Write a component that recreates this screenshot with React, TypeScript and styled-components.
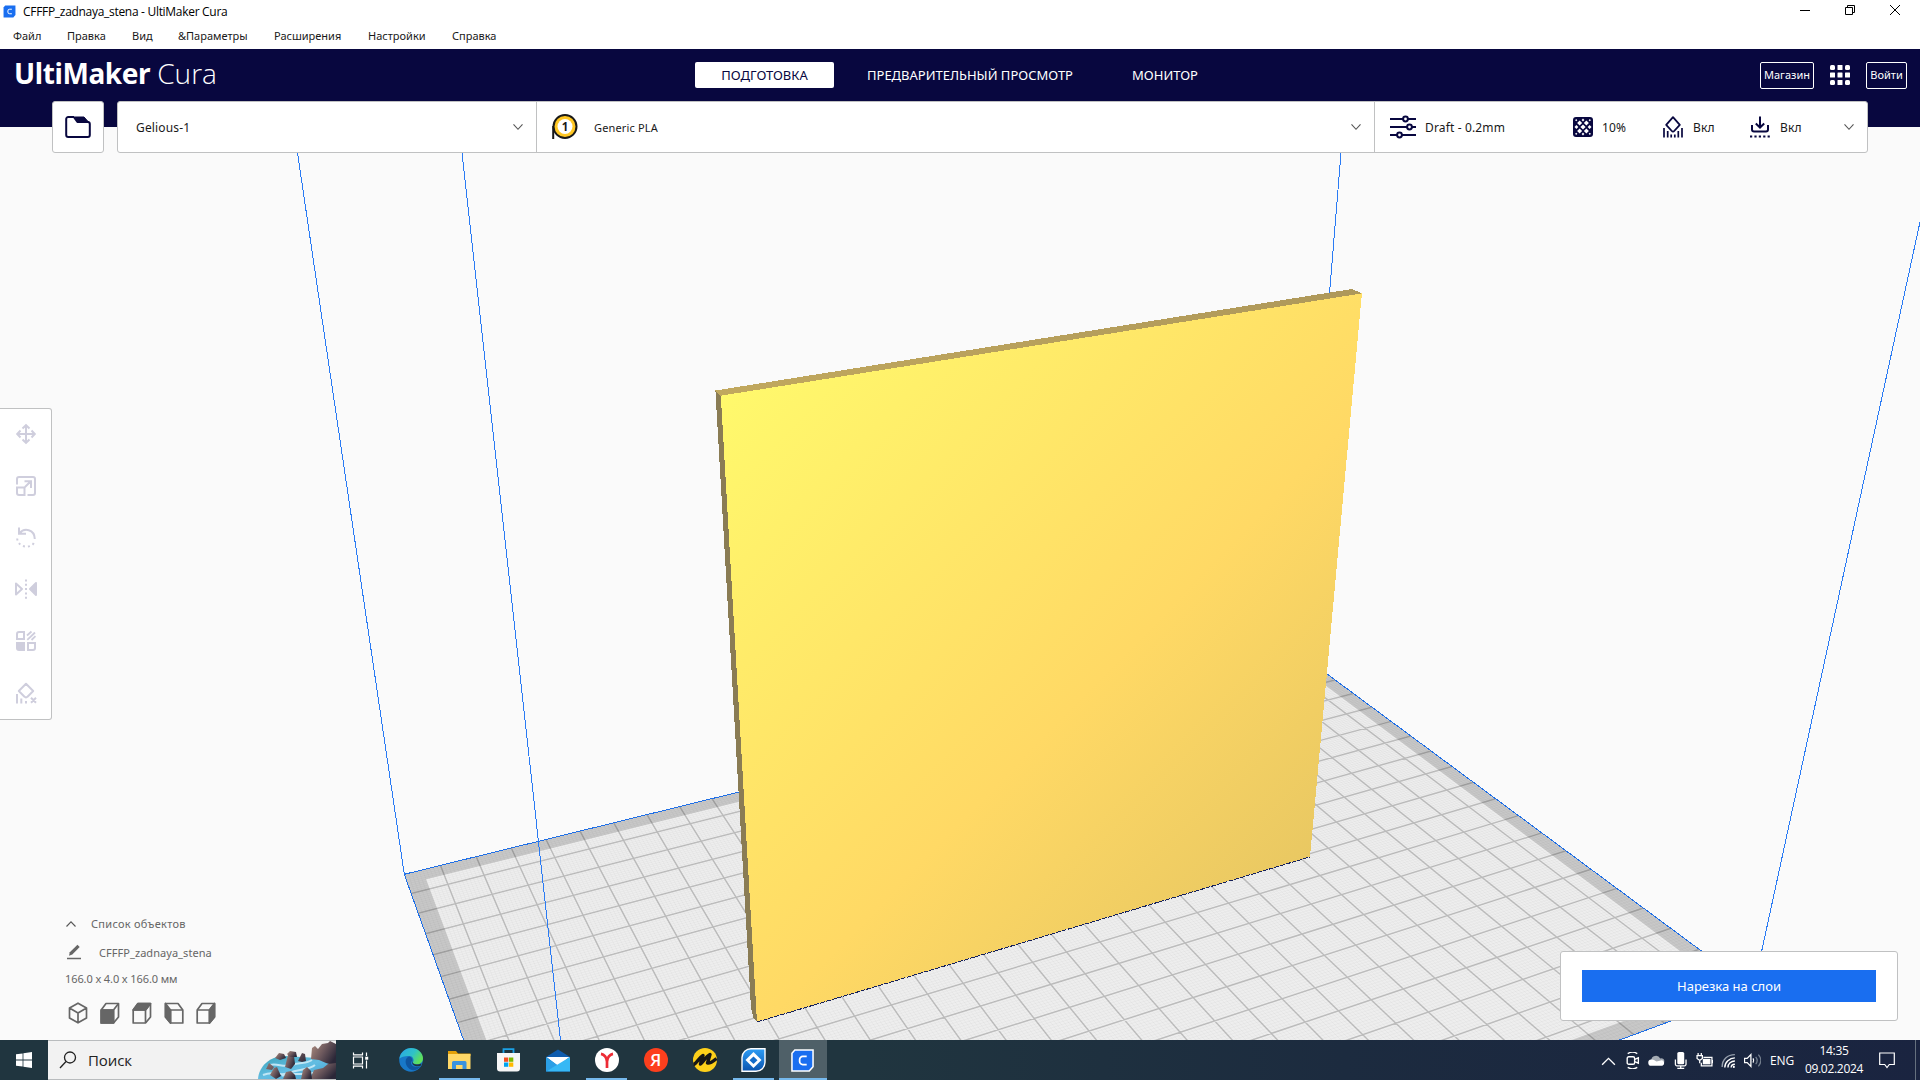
import React from "react";
import styled, { createGlobalStyle } from "styled-components";

const NAVY = "#08073f";
const BLUE = "#196ef0";
const LINE = "#c0c1c2";

const GlobalStyle = createGlobalStyle`
  * { box-sizing: border-box; }
  body { margin: 0; overflow: hidden; background: #fafafa; }
  svg { display: block; flex: none; }
`;

const Desktop = styled.div`
  width: 1920px;
  height: 1080px;
  display: flex;
  flex-direction: column;
  font-family: "Noto Sans", "Open Sans", sans-serif;
  font-size: 12px;
  color: #191919;
  white-space: nowrap;
`;

/* ---------- window chrome ---------- */

const TitleBar = styled.div`
  height: 24px;
  background: #fff;
  display: flex;
  align-items: center;
  justify-content: space-between;
  padding: 0 19px 4px 3px;
  color: #000;
`;

const TitleText = styled.div`
  display: flex;
  align-items: center;
  gap: 7px;
  padding-top: 2px;
  font-family: "Open Sans", sans-serif;
  font-size: 12px;
  letter-spacing: -0.3px;
`;

const WindowButtons = styled.div`
  display: flex;
  gap: 33px;
`;

const MenuBar = styled.div`
  height: 25px;
  background: #fff;
  display: flex;
  align-items: center;
  gap: 26px;
  padding: 0 0 3px 13px;
  font-size: 11px;
`;

const MenuItem = styled.span<{ $w: number }>`
  width: ${(p) => p.$w}px;
`;

/* ---------- workspace ---------- */

const Workspace = styled.div`
  position: relative;
  height: 991px;
  display: flex;
  flex-direction: column;
`;

const Scene = styled.svg`
  position: absolute;
  inset: 0;
`;

const Header = styled.header`
  position: relative;
  height: 52px;
  background: ${NAVY};
  display: grid;
  grid-template-columns: 695px 1fr auto;
  align-items: center;
  padding-right: 13px;
`;

const Logo = styled.div`
  display: flex;
  align-items: baseline;
  gap: 7px;
  padding: 0 0 3px 14px;
  color: #fff;
  font-size: 28px;
  line-height: 49px;
`;

const LogoBold = styled.span`
  font-weight: 700;
  letter-spacing: -0.4px;
`;

const LogoLight = styled.span`
  font-family: "Open Sans", "Noto Sans", sans-serif;
  font-weight: 300;
`;

const Tabs = styled.nav`
  display: flex;
  gap: 7px;
`;

const Tab = styled.div<{ $active?: boolean; $w: number }>`
  width: ${(p) => p.$w}px;
  height: 26px;
  line-height: 26px;
  border-radius: 2px;
  text-align: center;
  font-size: 13px;
  background: ${(p) => (p.$active ? "#fff" : "transparent")};
  color: ${(p) => (p.$active ? NAVY : "#fff")};
`;

const HeaderActions = styled.div`
  display: flex;
  align-items: center;
  gap: 15px;
`;

const OutlineButton = styled.div<{ $w: number }>`
  width: ${(p) => p.$w}px;
  height: 27px;
  line-height: 24px;
  border: 1px solid #fff;
  border-radius: 2px;
  color: #fff;
  text-align: center;
  font-size: 11px;
`;

const Stagebar = styled.div`
  position: relative;
  height: 52px;
  display: flex;
  gap: 13px;
  padding: 0 52px;
  background: linear-gradient(${NAVY} 26px, transparent 26px);
`;

const FolderButton = styled.div`
  width: 52px;
  border: 1px solid ${LINE};
  border-radius: 3px;
  background: #fff;
  display: grid;
  place-items: center;
`;

const Selector = styled.div`
  flex: 1;
  display: flex;
  border: 1px solid ${LINE};
  border-radius: 3px;
  background: #fff;
`;

const Section = styled.div<{ $w?: number; $left: number }>`
  ${(p) => (p.$w ? `width: ${p.$w}px;` : "flex: 1;")}
  display: flex;
  align-items: center;
  padding: 0 12px 0 ${(p) => p.$left}px;
  letter-spacing: 0.15px;
  & + & { border-left: 1px solid ${LINE}; }
`;

const SectionText = styled.span<{ $size?: number; $left?: number }>`
  flex: 1;
  padding-left: ${(p) => p.$left ?? 0}px;
  font-size: ${(p) => p.$size ?? 12}px;
`;

const Setting = styled.span<{ $w: number; $gap: number }>`
  width: ${(p) => p.$w}px;
  display: flex;
  align-items: center;
  gap: ${(p) => p.$gap}px;
`;

const Spacer = styled.span`
  flex: 1;
`;

const Body = styled.div`
  position: relative;
  flex: 1;
  display: grid;
  grid-template-columns: 52px 1fr auto;
`;

const ToolPanel = styled.div`
  height: 312px;
  margin-top: 255px;
  border: 1px solid ${LINE};
  border-left: 0;
  border-radius: 0 3px 3px 0;
  background: #fff;
`;

const Tool = styled.div`
  height: 51.8px;
  padding-bottom: 2px;
  display: grid;
  place-items: center;
`;

const ObjectPanel = styled.div`
  align-self: end;
  padding: 0 0 4px 13px;
  color: #666;
  font-size: 11px;
`;

const ObjectRow = styled.div<{ $h: number; $gap?: number; $left?: number; $track?: number }>`
  height: ${(p) => p.$h}px;
  display: flex;
  align-items: center;
  gap: ${(p) => p.$gap ?? 0}px;
  padding-left: ${(p) => p.$left ?? 0}px;
  letter-spacing: ${(p) => p.$track ?? 0}px;
`;

const ActionPanel = styled.div`
  align-self: end;
  width: 338px;
  height: 70px;
  margin: 0 22px 19px 0;
  border: 1px solid ${LINE};
  border-radius: 3px;
  background: #fff;
  display: grid;
  place-items: center;
`;

const SliceButton = styled.div`
  width: 294px;
  height: 32px;
  line-height: 33px;
  background: ${BLUE};
  color: #fff;
  text-align: center;
  font-size: 13px;
`;

/* ---------- taskbar ---------- */

const Taskbar = styled.div`
  height: 40px;
  display: flex;
  background: linear-gradient(90deg, #20353f 0%, #20353f 45%, #1c2b3f 70%, #1a2440 100%);
  font-family: "Open Sans", sans-serif;
`;

const StartButton = styled.div`
  width: 48px;
  display: grid;
  place-items: center;
`;

const Search = styled.div`
  width: 288px;
  background: #f2f2f2;
  border-top: 1px solid #b9bcbe;
  border-bottom: 1px solid #b9bcbe;
  display: flex;
  align-items: center;
  padding-left: 11px;
  font-size: 15px;
  color: #222;
`;

const SearchText = styled.span`
  flex: 1;
  padding-left: 11px;
  letter-spacing: -0.1px;
`;

const TaskViewButton = styled.div`
  width: 50px;
  display: grid;
  place-items: center;
`;

const TaskButton = styled.div<{ $running?: boolean; $active?: boolean }>`
  width: ${(p) => (p.$active ? 48 : 41)}px;
  margin: 0 ${(p) => (p.$active ? 0.5 : 4)}px;
  padding-top: 2px;
  display: grid;
  place-items: center;
  background: ${(p) => (p.$active ? "#4f6068" : "transparent")};
  border-bottom: 2px solid ${(p) => (p.$running || p.$active ? "#76b9ed" : "transparent")};
`;

const Tray = styled.div`
  flex: 1;
  display: flex;
  align-items: center;
  justify-content: flex-end;
  color: #fff;
  font-size: 12px;
`;

const TrayIcon = styled.span`
  width: 24px;
  display: grid;
  place-items: center;
`;

const Lang = styled.span`
  width: 36px;
  text-align: center;
  letter-spacing: -0.2px;
`;

const Clock = styled.span`
  width: 68px;
  text-align: center;
  line-height: 18px;
  font-size: 12px;
  letter-spacing: -0.3px;
`;

const Notice = styled.span`
  width: 38px;
  display: grid;
  place-items: center;
`;

const ShowDesktop = styled.span`
  width: 5px;
  height: 40px;
  margin-left: 9px;
  border-left: 1px solid #65707e;
`;

/* ---------- build plate perspective ---------- */

const U = 30;
const V = 19.85;

const project = (u: number, v: number): [number, number] => {
  const w = 1 + 0.00737 * u - 0.0157 * v;
  return [(404.3 + 39.44 * u + 0.4 * v) / w, (874.3 - 2.523 * u + 5.13 * v) / w];
};

const seg = (u1: number, v1: number, u2: number, v2: number) => {
  const a = project(u1, v1);
  const b = project(u2, v2);
  return `M${a[0].toFixed(1)} ${a[1].toFixed(1)}L${b[0].toFixed(1)} ${b[1].toFixed(1)}`;
};

const poly = (inset: number) =>
  [
    project(inset, inset),
    project(U - inset, inset),
    project(U - inset, V - inset),
    project(inset, V - inset),
  ]
    .map((p) => p.join(","))
    .join(" ");

const range = (n: number) => Array.from({ length: n }, (_, i) => i);
const major = [
  ...range(29).map((i) => seg(i + 1, 0, i + 1, V)),
  ...range(19).map((i) => seg(0, i + 1, U, i + 1)),
].join("");
const minor = [
  ...range(299).map((i) => seg((i + 1) / 10, 0, (i + 1) / 10, V)),
  ...range(198).map((i) => seg(0, (i + 1) / 10, U, (i + 1) / 10)),
].join("");

const BuildScene = () => (
  <Scene width="1920" height="991" viewBox="0 49 1920 991">
    <defs>
      <linearGradient id="face" gradientUnits="userSpaceOnUse" x1="721" y1="395" x2="1254" y2="914">
        <stop offset="0" stopColor="#fff96c" />
        <stop offset="0.63" stopColor="#ffd965" />
        <stop offset="1" stopColor="#e9c862" />
      </linearGradient>
      <linearGradient id="topface" x1="0" x2="1" y1="0" y2="0">
        <stop offset="0" stopColor="#c1a85e" />
        <stop offset="1" stopColor="#ae985a" />
      </linearGradient>
    </defs>
    <rect y="49" width="1920" height="991" fill="#fafafa" />
    <polygon points={poly(0)} fill="#c8c8c8" />
    <polygon points={poly(0.5)} fill="#eeeeee" />
    <path d={minor} stroke="#000" strokeOpacity="0.035" strokeWidth="0.8" fill="none" />
    <path d={major} stroke="#000" strokeOpacity="0.19" strokeWidth="1.5" fill="none" />
    <g stroke="#2a7bf4" strokeWidth="1" fill="none" shapeRendering="crispEdges">
      <polygon points={poly(0)} stroke="#1f6fe6" />
      <path d="M297.5 153L404.3 874.3" />
      <path d="M462 153L560.5 1040" />
      <path d="M1341 153L1300 654" />
      <path d="M1920 222L1753 991" />
    </g>
    <g shapeRendering="crispEdges">
      <polygon points="715.4,390.3 721.5,395.7 757.5,1022 753.5,1018 751,1008" fill="#8a7c54" />
      <polygon points="715.4,390.5 1352,289 1362,293.5 721,396" fill="url(#topface)" />
      <polygon points="720.8,395.7 1361.9,293.4 1310,856.7 757,1022" fill="url(#face)" />
      <path d="M757 1022L1310 856.9" stroke="#15205a" strokeWidth="1" strokeDasharray="5 1" />
    </g>
  </Scene>
);

/* ---------- icons ---------- */

const Chevron = ({ up, color = "#555" }: { up?: boolean; color?: string }) => (
  <svg width="12" height="8" viewBox="0 0 12 8" fill="none" stroke={color} strokeWidth="1.1">
    <path d={up ? "M1.5 6.5L6 1.8l4.5 4.7" : "M1.5 1.3L6 6.3l4.5-5"} />
  </svg>
);

const CuraMark = ({ size }: { size: number }) => (
  <svg width={size} height={size} viewBox="0 0 12 12">
    <path d="M2 .5h9.5v8.7l-2 2.3H.5V2.2z" fill={BLUE} stroke={size > 15 ? "#fff" : "none"} strokeWidth=".8" />
    <path d="M8.2 3.9H6.2a1.6 1.6 0 0 0-1.7 1.6v1a1.6 1.6 0 0 0 1.7 1.6h2" fill="none" stroke="#fff" strokeWidth=".9" />
  </svg>
);

const FolderIcon = () => (
  <svg width="26" height="24" viewBox="0 0 26 24" fill="none" stroke={NAVY} strokeWidth="2" strokeLinejoin="round">
    <path d="M1.2 20V4a2 2 0 0 1 2-2h5.600l3.600 5h10.400a2 2 0 0 1 2 2v11a2 2 0 0 1-2 2H3.200a2 2 0 0 1-2-2z" />
    <path d="M10 2h9l4.500 5H13z" fill={NAVY} strokeWidth="1" />
  </svg>
);

const SpoolIcon = () => (
  <svg width="28" height="28" viewBox="0 0 28 28">
    <path d="M2.200 26V13" stroke="#191919" strokeWidth="2" />
    <circle cx="14" cy="13.500" r="11.500" fill="#ffc723" stroke="#191919" strokeWidth="2" />
    <circle cx="14" cy="13.500" r="7.500" fill="#fff" />
    <text x="14" y="17.700" fontSize="11.500" fontWeight="700" textAnchor="middle" fill="#191919">1</text>
  </svg>
);

const SlidersIcon = () => (
  <svg width="26" height="24" viewBox="0 0 26 24" fill="none" stroke={NAVY} strokeWidth="2">
    <path d="M0 4h13M18 4h8M0 12h17M22 12h4M0 20h7M12 20h14" />
    <circle cx="15.500" cy="4" r="2.400" />
    <circle cx="19.500" cy="12" r="2.400" />
    <circle cx="9.500" cy="20" r="2.400" />
  </svg>
);

const diamonds: [number, number, number][] = [
  [10, 10, 2.6],
  [6.6, 6.1, 2.5],
  [13.4, 6.1, 2.5],
  [6.6, 13.9, 2.5],
  [13.4, 13.9, 2.5],
  [3.4, 10, 1.9],
  [16.6, 10, 1.9],
  [10, 3, 1.4],
  [10, 17, 1.4],
  [3.2, 3.2, 1.1],
  [16.8, 3.2, 1.1],
  [3.2, 16.8, 1.1],
  [16.8, 16.8, 1.1],
];

const InfillIcon = () => (
  <svg width="20" height="20" viewBox="0 0 20 20">
    <rect width="20" height="20" rx="3" fill={NAVY} />
    {diamonds.map(([x, y, r]) => (
      <path key={`${x}-${y}`} d={`M${x} ${y - r}l${r} ${r}l${-r} ${r}l${-r} ${-r}z`} fill="#fff" />
    ))}
  </svg>
);

const SupportIcon = () => (
  <svg width="20" height="22" viewBox="0 0 20 22" fill="none" stroke={NAVY} strokeWidth="1.800">
    <path d="M10 1.200l6.800 7.600-5.600 6.200a1.600 1.600 0 0 1-2.400 0L3.200 8.800z" strokeLinejoin="round" />
    <path d="M1 12v9.500M4.700 15v6.500M8.200 18.500v3M11.800 18.500v3M15.300 15v6.500M19 12v9.500" strokeWidth="1.700" />
  </svg>
);

const AdhesionIcon = () => (
  <svg width="20" height="22" viewBox="0 0 20 22" fill="none" stroke={NAVY} strokeWidth="2">
    <path d="M10 .5V11M5.800 7.500L10 11.500l4.200-4M2 9v4.500a2 2 0 0 0 2 2h12a2 2 0 0 0 2-2V9" />
    <path d="M0 20.500h20" strokeDasharray="2.200 2.200" />
  </svg>
);

const AppsIcon = () => (
  <svg width="22" height="22" viewBox="0 0 22 22" fill="#fff">
    {range(9).map((i) => (
      <rect key={i} x={1 + (i % 3) * 7.5} y={1 + Math.floor(i / 3) * 7.5} width="5" height="5" rx={i % 2 === 0 && i !== 4 ? 1.6 : 0.5} />
    ))}
  </svg>
);

const TOOL = "#cfcedd";
const toolIcons = [
  <g key="move" stroke={TOOL} strokeWidth="2" fill="none">
    <path d="M10 1.500v17M1.500 10h17M6.500 4.500L10 1.200l3.500 3.300M6.500 15.500l3.500 3.300 3.500-3.300M4.500 6.500L1.200 10l3.300 3.500M15.500 6.500L18.800 10l-3.300 3.500" />
  </g>,
  <g key="scale" stroke={TOOL} strokeWidth="2" fill="none">
    <path d="M1 8.500V3a2 2 0 0 1 2-2h14a2 2 0 0 1 2 2v14a2 2 0 0 1-2 2h-5.500" />
    <path d="M1 11.500h7.500V19H3a2 2 0 0 1-2-2zM9 11l5.500-5.500M8.500 5.200H15V12" />
  </g>,
  <g key="rotate" stroke={TOOL} strokeWidth="2" fill="none">
    <path d="M3 .5v6.300h7M3.500 6.300C8 .500 18.500 2 18.800 12" />
    <path d="M1.200 11.500C2 22 18 22 18.500 13.500" strokeDasharray="2 3" />
  </g>,
  <g key="mirror" stroke={TOOL} strokeWidth="2" fill="none">
    <path d="M0 4.500v11L6 10z" strokeLinejoin="round" />
    <path d="M20 4v12l-6-6z" fill={TOOL} strokeLinejoin="round" />
    <path d="M10 .5v19.500" strokeDasharray="2 2.300" />
  </g>,
  <g key="mesh" stroke={TOOL} strokeWidth="2" fill="none">
    <path d="M3 1h5v7H1V3a2 2 0 0 1 2-2zM12 12h7v5a2 2 0 0 1-2 2h-5z" />
    <path d="M1 12h7v7H3a2 2 0 0 1-2-2z" fill={TOOL} />
    <path d="M11 4.500L15.500.5M11.300 8.800L19 1.500M15.500 9L19.500 5.200" strokeWidth="1.800" />
  </g>,
  <g key="blocker" stroke={TOOL} strokeWidth="2" fill="none">
    <path d="M10 .8l7.200 7.200-5.700 5.700a2 2 0 0 1-3 0L2.800 8z" strokeLinejoin="round" />
    <path d="M1 11v9.500M5.300 15.500v5M10 18v2.500M15 14.800l5 5M20 14.800l-5 5" />
  </g>,
];

const Cube = ({ face }: { face: number }) => (
  <svg width="20" height="22" viewBox="0 0 20 22" fill="none" stroke="#666" strokeWidth="1.700" strokeLinejoin="round">
    {face === 0 && <path d="M10 1.200l8.500 4.900v9.800L10 20.800l-8.500-4.900V6.100zM1.500 6.100L10 11l8.500-4.900M10 11v9.800" />}
    {(face === 1 || face === 2 || face === 4) && (
      <>
        <path d="M1.200 8L6 1.500h12.500V15l-5 6H1.200z" />
        <path d="M1.200 8h12.300v13M13.500 8l5-6.500" />
        {face === 1 && <path d="M1.200 8h12.300v13H1.200z" fill="#666" />}
        {face === 2 && <path d="M1.200 8L6 1.500h12.500l-5 6.500z" fill="#666" />}
        {face === 4 && <path d="M13.500 8l5-6.500V15l-5 6z" fill="#666" />}
      </>
    )}
    {face === 3 && (
      <>
        <path d="M18.800 8L14 1.500H1.500V15l5 6h12.300z" />
        <path d="M18.800 8H6.500v13" />
        <path d="M6.500 8l-5-6.500V15l5 6z" fill="#666" />
      </>
    )}
  </svg>
);

const SearchArt = () => (
  <svg width="78" height="38" viewBox="0 0 78 38">
    <defs>
      <linearGradient id="water" x1="0" y1="0" x2="1" y2="1">
        <stop offset="0" stopColor="#3ba3b8" />
        <stop offset=".5" stopColor="#63bde2" />
        <stop offset="1" stopColor="#3e9fd0" />
      </linearGradient>
      <linearGradient id="rock" x1="0" y1="0" x2="1" y2=".6">
        <stop offset="0" stopColor="#b08f80" />
        <stop offset=".55" stopColor="#6b575c" />
        <stop offset="1" stopColor="#2b2738" />
      </linearGradient>
    </defs>
    <path d="M0 38C1 25 12 15 27 15l32 2 19 8v13z" fill="url(#water)" />
    <path d="M5 34c12-5 16 2 26-2s20-3 26-8M12 24c8-2 13 3 22 0s14-1 20-5M24 35c9-5 22 1 34-4" stroke="#bfe6f5" strokeWidth="2" fill="none" />
    <g fill="url(#rock)">
      <path d="M53 18l1-11 3-2 3 3 4-5 6-1 2-2 6 3v22l-10-3-7-3z" />
      <path d="M52 38l4-9 9-2 5-4 8-1v16z" />
      <path d="M27 26l3-12 3-2 3 3 1 8-4 5z" />
      <path d="M12 34l4-7 3-1 4 9-5 3z" />
      <path d="M25 38l3-7 5-1 4 4 1 4z" />
      <path d="M43 38l2-9 4-3 4 4 1 8z" />
      <path d="M17 17l4-5 5 1 2 4-6 2z" />
      <path d="M29 13l3-3 6 1 1 5h-7z" />
      <path d="M40 20l4-8 3 1 1 7-4 1zM8 28l3-6 5 4-2 3z" />
    </g>
  </svg>
);

const WindowsIcon = () => (
  <svg width="16" height="16" viewBox="0 0 16 16" fill="#fff">
    <path d="M0 2.300L6.600 1.400v6.200H0zM7.400 1.300L16 0v7.600H7.400zM0 8.400h6.600v6.200L0 13.700zM7.400 8.400H16V16l-8.600-1.300z" />
  </svg>
);

const TaskViewIcon = () => (
  <svg width="18" height="17" viewBox="0 0 18 17" fill="none" stroke="#fff" strokeWidth="1.200">
    <path d="M1.500 5h9v7h-9zM1.500.5v2.300h9V.5M1.500 16.500v-2.300h9v2.300M14.500.5V4M14.500 8.500v8" />
    <rect x="13.200" y="4.700" width="3" height="3" fill="#fff" stroke="none" />
  </svg>
);

const EdgeIcon = () => (
  <svg width="24" height="24" viewBox="0 0 24 24">
    <defs>
      <linearGradient id="edgeA" x1="0" y1="0" x2="1" y2=".5">
        <stop offset="0" stopColor="#2aa5e8" />
        <stop offset=".6" stopColor="#2fc2c8" />
        <stop offset="1" stopColor="#5fe05a" />
      </linearGradient>
    </defs>
    <circle cx="12" cy="12" r="11.800" fill="#1878c8" />
    <path d="M.3 11C1.500 4 6.500 0 12 0c7 0 12 5 12 10.200 0 4-3 6-6.300 6-2.700 0-4.300-1-3.700-2 1.500-2.500 0-6.200-4-6.200-4.500 0-8.500 1-9.700 3z" fill="url(#edgeA)" />
    <path d="M10 8.500c-4 1.500-4.500 7-1 11s8.500 3.600 13-1.300c-3 1.500-7.500 1-9.300-1.200-1.200-1.500-1-3.200.8-4.200-.2-2.500-1.500-4.300-3.500-4.300z" fill="#0f559f" />
    <path d="M13 13c.5 3 4 4.500 9.500 2.500l-.5 2c-4 2-9.500.5-9-4.500z" fill="#20353f" />
  </svg>
);

const ExplorerIcon = () => (
  <svg width="23" height="20" viewBox="0 0 23 20">
    <path d="M0 1h8l2 2.500h12.500V6H0z" fill="#e3a008" />
    <path d="M0 4h22.500v15H0z" fill="#ffd867" />
    <path d="M4 19v-6.500A1.500 1.500 0 0 1 5.500 11h11.500a1.500 1.500 0 0 1 1.500 1.500V19h-4v-4H8v4z" fill="#3b93dd" />
  </svg>
);

const StoreIcon = () => (
  <svg width="23" height="24" viewBox="0 0 23 24">
    <path d="M6.500 5.500V1.200h10v4.300" fill="none" stroke="#1ba1e6" strokeWidth="1.800" />
    <path d="M0 5h23v15.500a3 3 0 0 1-3 3H3a3 3 0 0 1-3-3z" fill="#f7f7f7" />
    <path d="M7 9.500h4.300v4.300H7z" fill="#f25022" />
    <path d="M12 9.500h4.300v4.300H12z" fill="#7fba00" />
    <path d="M7 14.500h4.300v4.300H7z" fill="#00a4ef" />
    <path d="M12 14.500h4.300v4.300H12z" fill="#ffb900" />
  </svg>
);

const MailIcon = () => (
  <svg width="24" height="23" viewBox="0 0 24 23">
    <path d="M0 8L12 .5 24 8v14.500H0z" fill="#0f5cad" />
    <path d="M.5 8h23L12 17z" fill="#fff" />
    <path d="M0 8l12 8.500L0 22.500z" fill="#2b9fe6" />
    <path d="M24 8L0 22.500h24z" fill="#37b8f5" />
  </svg>
);

const YandexBrowserIcon = () => (
  <svg width="24" height="24" viewBox="0 0 24 24">
    <circle cx="12" cy="12" r="12" fill="#fff" />
    <path d="M6 5.800c3 .5 6 3.500 6 8v6.200M18 5.800c-3 .5-6 3.500-6 8" fill="none" stroke="#ed2b35" strokeWidth="2.700" />
  </svg>
);

const YandexIcon = () => (
  <svg width="24" height="24" viewBox="0 0 24 24">
    <circle cx="12" cy="12" r="12" fill="#fc3f1d" />
    <text x="11.800" y="18.300" textAnchor="middle" fontFamily="Open Sans, sans-serif" fontSize="17" fontWeight="600" fill="#fff">Я</text>
  </svg>
);

const YellowIcon = () => (
  <svg width="24" height="24" viewBox="0 0 24 24">
    <circle cx="12" cy="12" r="12" fill="#fdd01a" />
    <path d="M.5 16.500C3 16 6 10 10 7.500L7.500 16C10 14 13 8.500 17 6.500l-2.500 8.500c2.500 1 6-2 9-4.500" fill="none" stroke="#161616" strokeWidth="3.400" strokeLinejoin="round" />
  </svg>
);

const BlueAppIcon = () => (
  <svg width="25" height="24" viewBox="0 0 25 24">
    <defs>
      <linearGradient id="blueApp" x1="0" y1="0" x2="0" y2="1">
        <stop offset="0" stopColor="#2d9df5" />
        <stop offset="1" stopColor="#0a53ae" />
      </linearGradient>
    </defs>
    <path d="M10 .8h14v13.500a9 9 0 0 1-9 9H1V9.500A9 9 0 0 1 10 .8z" fill="url(#blueApp)" stroke="#fff" strokeWidth="1.400" />
    <path d="M12.500 4l8 8-8 8-8-8z" fill="#fff" />
    <path d="M12.500 8.500l4 3.700-4 3.700-4-3.700z" fill="#146cc9" />
  </svg>
);

const tray = [
  <path key="up" d="M2 12l6-6 6 6" fill="none" stroke="#fff" strokeWidth="1.300" />,
  <g key="cam" fill="none" stroke="#fff" strokeWidth="1.300">
    <path d="M3.500 1.500C6 0 10 0 12.500 1.500M3.500 14.500c2.500 1.500 6.500 1.500 9 0" />
    <rect x="3" y="4.500" width="7" height="7" rx="1.500" />
    <path d="M10 7l3.500-1.500v5L10 9" />
  </g>,
  <g key="cloud">
    <path d="M3 8a4.500 4.500 0 0 1 8.500-2A3.500 3.500 0 0 1 15.500 9L8 11z" fill="#a5abb3" />
    <path d="M3.500 13a3 3 0 0 1-.5-6c2-.3 4 1 5 2l5-1.200a2.700 2.700 0 0 1 .5 5.200z" fill="#fff" />
  </g>,
  <g key="mic">
    <rect x="5" y="0" width="6.500" height="11.500" rx="1.500" fill="#fff" />
    <path d="M3.200 7v4.500a1.500 1.500 0 0 0 1.500 1.500h7a1.500 1.500 0 0 0 1.500-1.500V7M8.200 13v2.500M5 15.500h6.500" fill="none" stroke="#fff" strokeWidth="1.200" />
  </g>,
  <g key="bat" fill="none" stroke="#fff" strokeWidth="1.200">
    <path d="M7 5h8v8H5v-3M16 7.500v3M2 1v2.500M5 1v2.500M1 3.500h5v2.500L3.500 8 1 6zM3.500 8v2.500" />
    <rect x="7" y="7" width="6" height="4" fill="#fff" />
  </g>,
  <g key="wifi" fill="none" stroke="#fff" strokeWidth="1.300">
    <path d="M2 14C2 7 7 2.500 14 2.500" stroke="#97a0ad" />
    <path d="M4.500 14.500C4.500 9.500 9 5.500 14 5.500M7.500 14.500c0-3.500 3-6 6.500-6M10.500 14.500c0-1.700 1.500-3 3.500-3" />
    <circle cx="13" cy="14" r="1" fill="#fff" stroke="none" />
  </g>,
  <g key="snd" fill="none" stroke="#fff" strokeWidth="1.200">
    <path d="M.5 6h2.500l3.500-3.500v11L3 10H.5z" />
    <path d="M8.500 6c1 1.500 1 2.500 0 4" />
    <path d="M11 4.500c2 2.500 2 4.500 0 7M13.500 2.500c3 3.500 3 7.500 0 11" stroke="#737e8d" />
  </g>,
];

const menus: [string, number][] = [
  ["Файл", 28],
  ["Правка", 39],
  ["Вид", 20],
  ["&Параметры", 70],
  ["Расширения", 68],
  ["Настройки", 58],
  ["Справка", 46],
];

export default function App() {
  return (
    <Desktop>
      <GlobalStyle />
      <TitleBar>
        <TitleText>
          <CuraMark size={13} />
          CFFFP_zadnaya_stena - UltiMaker Cura
        </TitleText>
        <WindowButtons>
          <svg width="12" height="12" viewBox="0 0 12 12" stroke="#000"><path d="M1 6.500h10" /></svg>
          <svg width="12" height="12" viewBox="0 0 12 12" stroke="#000" fill="none"><path d="M1.500 3.500h7v7h-7zM3.500 3.500v-2h7v7h-2" /></svg>
          <svg width="12" height="12" viewBox="0 0 12 12" stroke="#000"><path d="M1 1l10 10M11 1L1 11" /></svg>
        </WindowButtons>
      </TitleBar>
      <MenuBar>
        {menus.map(([label, w]) => (
          <MenuItem key={label} $w={w}>{label}</MenuItem>
        ))}
      </MenuBar>

      <Workspace>
        <BuildScene />
        <Header>
          <Logo>
            <LogoBold>UltiMaker</LogoBold>
            <LogoLight>Cura</LogoLight>
          </Logo>
          <Tabs>
            <Tab $active $w={139}>ПОДГОТОВКА</Tab>
            <Tab $w={258}>ПРЕДВАРИТЕЛЬНЫЙ ПРОСМОТР</Tab>
            <Tab $w={118}>МОНИТОР</Tab>
          </Tabs>
          <HeaderActions>
            <OutlineButton $w={54}>Магазин</OutlineButton>
            <AppsIcon />
            <OutlineButton $w={41}>Войти</OutlineButton>
          </HeaderActions>
        </Header>

        <Stagebar>
          <FolderButton><FolderIcon /></FolderButton>
          <Selector>
            <Section $w={418} $left={18}>
              <SectionText>Gelious-1</SectionText>
              <Chevron />
            </Section>
            <Section $left={14}>
              <SpoolIcon />
              <SectionText $size={11} $left={15}>Generic PLA</SectionText>
              <Chevron />
            </Section>
            <Section $w={493} $left={15}>
              <Setting $w={183} $gap={9}><SlidersIcon />Draft - 0.2mm</Setting>
              <Setting $w={90} $gap={9}><InfillIcon />10%</Setting>
              <Setting $w={87} $gap={10}><SupportIcon />Вкл</Setting>
              <Setting $w={60} $gap={10}><AdhesionIcon />Вкл</Setting>
              <Spacer />
              <Chevron />
            </Section>
          </Selector>
        </Stagebar>

        <Body>
          <ToolPanel>
            {toolIcons.map((icon, i) => (
              <Tool key={i}>
                <svg width="22" height="22" viewBox="-1 -1 22 22">{icon}</svg>
              </Tool>
            ))}
          </ToolPanel>
          <ObjectPanel>
            <ObjectRow $h={29} $gap={14} $track={0.28}><Chevron up />Список объектов</ObjectRow>
            <ObjectRow $h={28} $gap={17} $left={1} $track={0.05}>
              <svg width="16" height="16" viewBox="0 0 16 16">
                <path d="M1 14.500h14" stroke="#666" strokeWidth="1.500" />
                <path d="M3 11.800l.8-3.600L11.500.8l2.200 2.200-7.400 7.600z" fill="#666" />
              </svg>
              CFFFP_zadnaya_stena
            </ObjectRow>
            <ObjectRow $h={24} $track={-0.1}>166.0 x 4.0 x 166.0 мм</ObjectRow>
            <ObjectRow $h={46} $gap={12} $left={3}>
              {range(5).map((i) => <Cube key={i} face={i} />)}
            </ObjectRow>
          </ObjectPanel>
          <ActionPanel>
            <SliceButton>Нарезка на слои</SliceButton>
          </ActionPanel>
        </Body>
      </Workspace>

      <Taskbar>
        <StartButton><WindowsIcon /></StartButton>
        <Search>
          <svg width="18" height="18" viewBox="0 0 18 18" fill="none" stroke="#222" strokeWidth="1.300">
            <circle cx="11" cy="6.500" r="5.500" />
            <path d="M7 10.500L1 17" />
          </svg>
          <SearchText>Поиск</SearchText>
          <SearchArt />
        </Search>
        <TaskViewButton><TaskViewIcon /></TaskViewButton>
        <TaskButton><EdgeIcon /></TaskButton>
        <TaskButton $running><ExplorerIcon /></TaskButton>
        <TaskButton><StoreIcon /></TaskButton>
        <TaskButton><MailIcon /></TaskButton>
        <TaskButton $running><YandexBrowserIcon /></TaskButton>
        <TaskButton><YandexIcon /></TaskButton>
        <TaskButton><YellowIcon /></TaskButton>
        <TaskButton $running><BlueAppIcon /></TaskButton>
        <TaskButton $active><CuraMark size={23} /></TaskButton>
        <Tray>
          {tray.map((icon, i) => (
            <TrayIcon key={i}>
              <svg width="17" height="17" viewBox="0 0 16 16">{icon}</svg>
            </TrayIcon>
          ))}
          <Lang>ENG</Lang>
          <Clock>14:35<br />09.02.2024</Clock>
          <Notice>
            <svg width="16" height="17" viewBox="0 0 16 17" fill="none" stroke="#fff" strokeWidth="1.200">
              <path d="M.7 1h14.600v11.500h-5L8 15.500l-2.300-3h-5z" />
            </svg>
          </Notice>
          <ShowDesktop />
        </Tray>
      </Taskbar>
    </Desktop>
  );
}
